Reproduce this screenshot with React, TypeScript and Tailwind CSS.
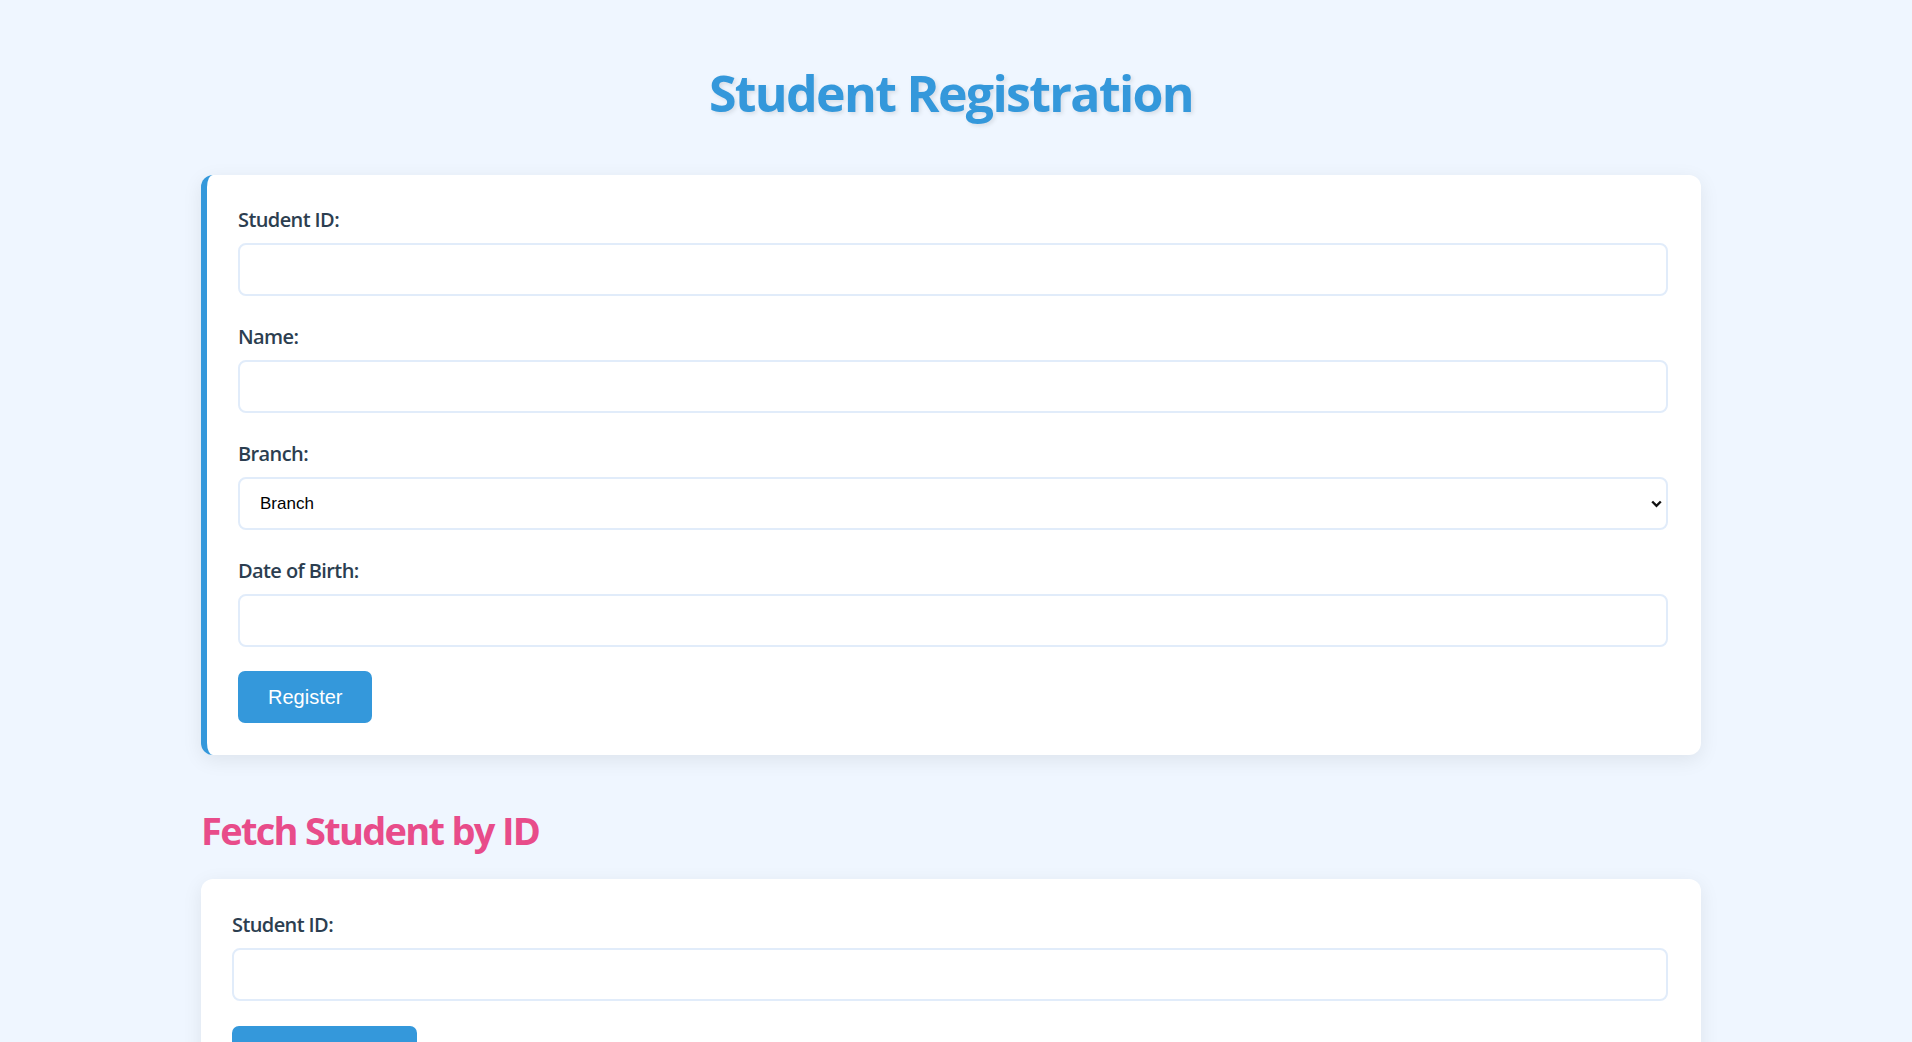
import { useState } from "react";

// Student Registration page: title, registration card with blue accent, fetch card below
const labelCls =
  "block mb-[10px] text-[20px] leading-[27px] font-semibold tracking-[-0.03em] text-[#2c3e50]";
const inputCls =
  "block w-full h-[53px] rounded-[8px] border-2 border-[#e1ecfa] bg-white px-[15px] text-[17px] text-black outline-none font-['Liberation_Sans',Arial,sans-serif]";
const buttonCls =
  "h-[52px] rounded-[7px] bg-[#3498db] px-[30px] text-[20px] leading-[23px] text-white font-['Liberation_Sans',Arial,sans-serif]";

function Field({ label, last, children }: { label: string; last?: boolean; children: React.ReactNode }) {
  return (
    <div className={last ? "mb-[24px]" : "mb-[27px]"}>
      <label className={labelCls}>{label}</label>
      {children}
    </div>
  );
}

export default function App() {
  const [branch, setBranch] = useState("");

  return (
    <div className="min-h-screen bg-[#eff6ff] pr-[10px] font-['Open_Sans','Noto_Sans',sans-serif]">
      <div className="mx-auto max-w-[1500px] pt-[63px] pb-[40px]">
        {/* Header */}
        <h1 className="mb-[52px] text-center text-[50px] leading-[60px] font-bold tracking-[-0.033em] text-[#3498db] [text-shadow:2px_2px_4px_rgba(0,0,0,0.1)]">
          Student Registration
        </h1>

        {/* Registration card */}
        <div className="rounded-[12px] border-l-[6px] border-[#3498db] bg-white pt-[31px] pb-[32px] pl-[31px] pr-[33px] shadow-[0_5px_20px_rgba(0,0,0,0.08)]">
          <Field label="Student ID:">
            <input type="text" className={inputCls} />
          </Field>
          <Field label="Name:">
            <input type="text" className={inputCls} />
          </Field>
          <Field label="Branch:">
            <div className="relative">
              <select
                value={branch}
                onChange={(e) => setBranch(e.target.value)}
                className={inputCls + " appearance-none pl-[20px] text-[16.67px]"}
              >
                <option value="">Branch</option>
                <option value="CSE">CSE</option>
                <option value="ECE">ECE</option>
                <option value="EEE">EEE</option>
                <option value="MECH">MECH</option>
                <option value="CIVIL">CIVIL</option>
              </select>
              <svg
                className="pointer-events-none absolute right-[6px] top-1/2 -translate-y-1/2"
                width="11"
                height="8"
                viewBox="0 0 11 8"
                fill="none"
              >
                <path d="M1.2 1.5L5.5 5.8L9.8 1.5" stroke="#111" strokeWidth="2.4" />
              </svg>
            </div>
          </Field>
          <Field label="Date of Birth:" last>
            <input type="text" className={inputCls} />
          </Field>
          <button type="button" className={buttonCls}>
            Register
          </button>
        </div>

        {/* Fetch section */}
        <h2 className="mt-[52px] mb-[26px] text-[38px] leading-[46px] font-bold tracking-[-0.045em] text-[#e84c8a]">
          Fetch Student by ID
        </h2>
        <div className="rounded-[12px] bg-white pt-[32px] pb-[32px] pl-[31px] pr-[33px] shadow-[0_5px_20px_rgba(0,0,0,0.08)]">
          <label className={labelCls}>Student ID:</label>
          <input type="text" className={inputCls} />
          <button type="button" className={buttonCls + " mt-[25px]"}>
            Fetch Student
          </button>
        </div>
      </div>
    </div>
  );
}
